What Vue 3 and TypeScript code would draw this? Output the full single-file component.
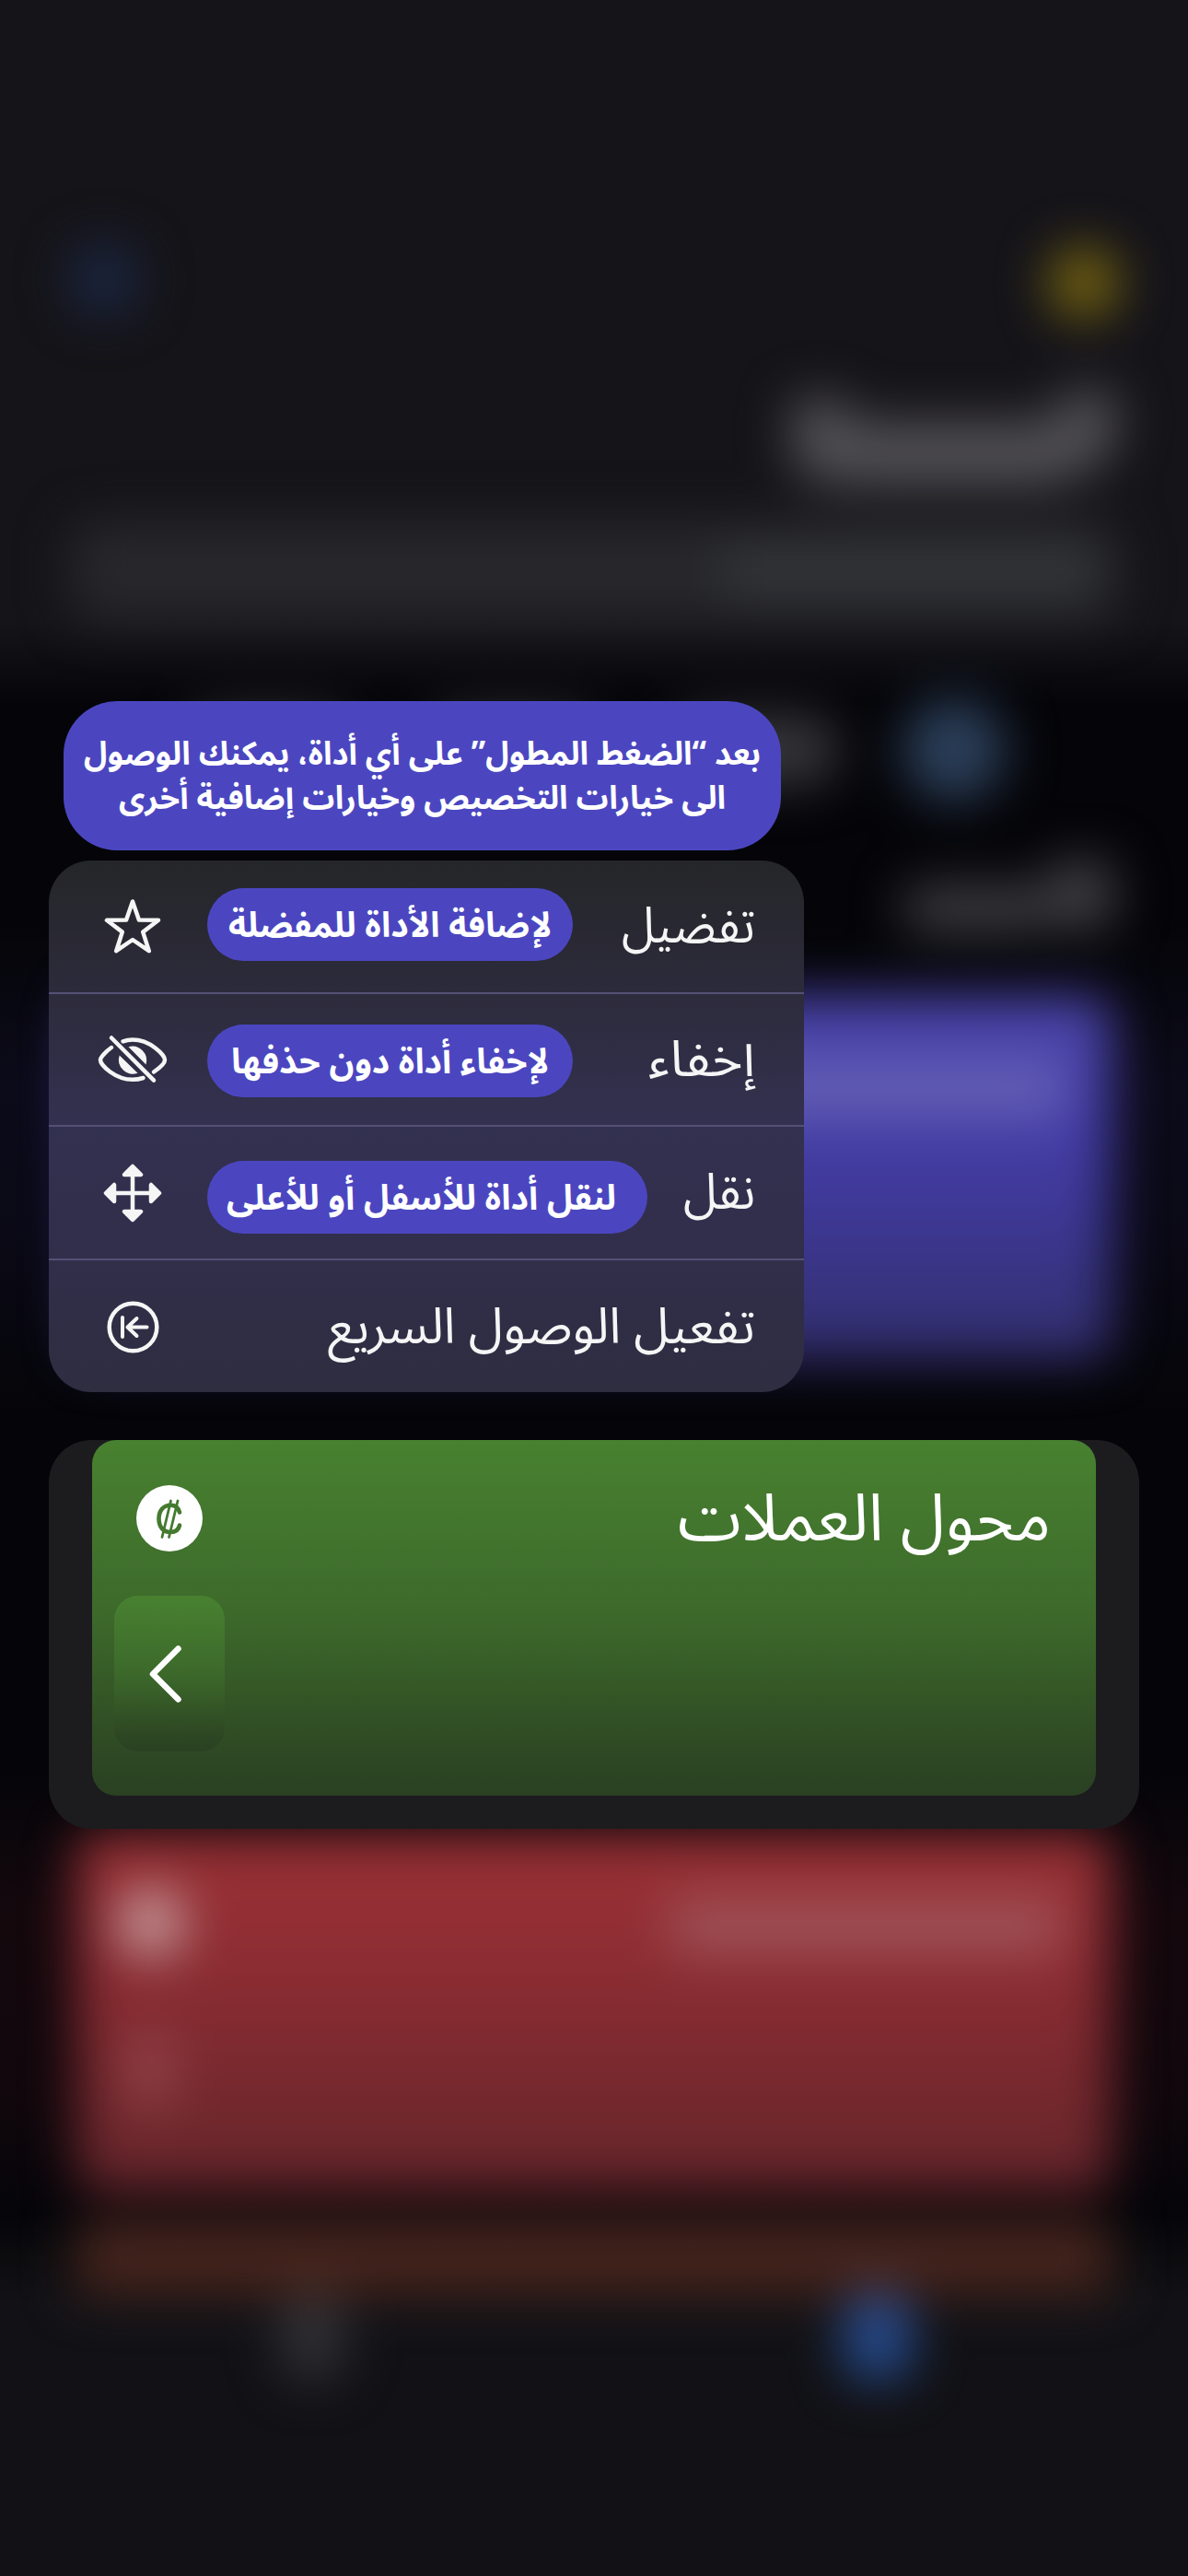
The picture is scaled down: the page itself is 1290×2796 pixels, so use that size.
<script setup lang="ts">
type IconName = 'star' | 'hide' | 'move' | 'quick'

interface MenuItem {
  icon: IconName
  label: string
  width: number
  hint?: string
  hintWidth?: number
}

const items: MenuItem[] = [
  { icon: 'star', label: 'تفضيل', width: 145, hint: 'لإضافة الأداة للمفضلة', hintWidth: 351 },
  { icon: 'hide', label: 'إخفاء', width: 116, hint: 'لإخفاء أداة دون حذفها', hintWidth: 345 },
  { icon: 'move', label: 'نقل', width: 78, hint: 'لنقل أداة للأسفل أو للأعلى', hintWidth: 423 },
  { icon: 'quick', label: 'تفعيل الوصول السريع', width: 464 },
]

const tip = [
  { text: 'بعد “الضغط المطول” على أي أداة، يمكنك الوصول', width: 735 },
  { text: 'الى خيارات التخصيص وخيارات إضافية أخرى', width: 659 },
]
</script>

<template>
  <div class="screen">
    <div class="backdrop">
      <div class="scene">
        <div class="nav"><i class="dot blue"></i><i class="dot yellow"></i></div>
        <div class="heading"><i class="h1"></i><i class="h2"></i><i class="h3"></i></div>
        <div class="search"><i></i></div>
        <div class="chips"><i></i><i></i><i></i><i class="on"></i></div>
        <div class="section"><i class="s1"></i><i class="s2"></i></div>
        <div class="tile violet"><i></i></div>
        <div class="tile red"><b></b><i></i><u></u></div>
        <div class="tile orange"></div>
        <div class="tabs"><i></i><i class="on"></i></div>
      </div>
    </div>

    <main class="content">
      <div class="tip">
        <svg v-for="t in tip" :key="t.text" :width="t.width" height="48" class="txt bold">
          <text :x="t.width" y="35" :textLength="t.width" lengthAdjust="spacingAndGlyphs" font-size="35">{{ t.text }}</text>
        </svg>
      </div>

      <div class="menu">
        <div v-for="item in items" :key="item.icon" class="row" :class="item.icon">
          <div class="icon">
            <svg v-if="item.icon === 'star'" width="76" height="76" viewBox="0 0 76 76" class="line">
              <path d="M38 10.500L44.900 30.500L66 30.800L49.200 43.600L55.800 64.200L38 52L20.200 64.200L26.800 43.600L10 30.800L31.100 30.500Z" />
            </svg>
            <svg v-else-if="item.icon === 'hide'" width="76" height="76" viewBox="0 0 76 76" class="line">
              <path d="M27.500 17.300C30.700 16.100 34.200 15.500 38 15.500C57 15.500 73 32 73 37.500C73 40.500 67.500 46 61 50.500" />
              <path d="M49.500 57C45.800 58.200 42 58.800 38 58.800C19 58.800 3 43 3 37.500C3 35 8.500 28.500 15 24" />
              <path class="solid" d="M33.500 23.200A15.400 15.400 0 0 1 52.500 42.400ZM23.700 32.500A15.400 15.400 0 0 0 43.500 51.700Z" />
              <path d="M15 13.500L61 59.700" />
            </svg>
            <svg v-else-if="item.icon === 'move'" width="76" height="76" viewBox="0 0 76 76" class="line">
              <path d="M38 16V60M16 38H60" />
              <path class="head" d="M38 9L47 18H29ZM38 67L47 58H29ZM9 38L18 29V47ZM67 38L58 29V47Z" />
            </svg>
            <svg v-else width="76" height="76" viewBox="0 0 76 76" class="line">
              <circle cx="38.500" cy="37.500" r="25.800" />
              <path d="M27 27V48M53.500 37.500H32.500M42.500 28L32.500 37.500L42.500 47" stroke-width="4" />
            </svg>
          </div>
          <div v-if="item.hint" class="hint">
            <svg :width="item.hintWidth" height="50" class="txt bold">
              <text :x="item.hintWidth" y="37.500" :textLength="item.hintWidth" lengthAdjust="spacingAndGlyphs" font-size="38">{{ item.hint }}</text>
            </svg>
          </div>
          <svg :width="item.width" height="100" class="txt label">
            <text :x="item.width" y="67.500" :textLength="item.width" lengthAdjust="spacingAndGlyphs" font-size="54">{{ item.label }}</text>
          </svg>
        </div>
      </div>

      <div class="preview">
        <div class="card">
          <div class="top">
            <svg width="72" height="72" viewBox="0 0 72 72">
              <circle cx="36" cy="36" r="36" fill="#fff" />
              <g fill="none" stroke="#447a2f" stroke-linecap="round">
                <path d="M47 29.500C45.500 24 42 21.800 37.500 21.800C29.500 21.800 24.500 27.500 24.500 36.500C24.500 45.500 29.500 51 37 51C42.500 51 46 48.500 47 43.500" stroke-width="4.600" />
                <path d="M37.500 17L28 56.500M45 17L35.500 56.500" stroke-width="2.800" />
              </g>
            </svg>
            <svg width="405" height="110" class="txt">
              <text x="405" y="79" textLength="405" lengthAdjust="spacingAndGlyphs" font-size="71">محول العملات</text>
            </svg>
          </div>
          <div class="go">
            <svg width="48" height="72" viewBox="0 0 48 72"><path d="M34.500 8.500L7 36L34.500 63.500" fill="none" stroke="#fff" stroke-width="6.500" stroke-linecap="round" stroke-linejoin="round" /></svg>
          </div>
        </div>
      </div>
    </main>
  </div>
</template>

<style>
body {
  background: #050509;
}
</style>

<style scoped>
.screen {
  position: relative;
  width: 1290px;
  height: 2796px;
  overflow: hidden;
  font-family: "Noto Sans Arabic", "Noto Sans", "DejaVu Sans", sans-serif;
}
.backdrop {
  position: absolute;
  inset: 0;
  background: linear-gradient(#151419 0, #151419 675px, #0e0e13 712px, #050509 765px, #050509 1010px, #0c0b1a 1180px, #0a0915 1350px, #050509 1530px, #050509 1930px, #14080d 2080px, #10070c 2280px, #050509 2400px, #0c0c0f 2450px, #121216 2500px, #121216 100%);
}
.scene {
  display: flex;
  flex-direction: column;
  height: 2796px;
  filter: blur(27px);
}
.scene i,
.scene b,
.scene u {
  display: block;
}
.nav {
  display: flex;
  justify-content: space-between;
  padding: 264px 74px 0 74px;
}
.dot {
  width: 78px;
  height: 78px;
  border-radius: 50%;
}
.dot.blue { background: #1b2742; }
.dot.yellow { background: #766411; margin-top: 4px; }
.heading {
  display: flex;
  justify-content: flex-end;
  align-items: flex-end;
  height: 100px;
  margin: 80px 76px 0 0;
}
.heading i { background: #535257; }
.h1 { width: 64px; height: 94px; border-radius: 20px 20px 20px 50px; }
.h2 { width: 225px; height: 68px; }
.h3 { width: 66px; height: 94px; border-radius: 20px 20px 60px 0; margin-bottom: 8px; }
.search {
  display: flex;
  justify-content: flex-end;
  align-items: center;
  height: 108px;
  margin: 40px 76px 0;
  border-radius: 26px;
  background: #27272c;
}
.search i { width: 410px; height: 54px; margin-right: 20px; background: #34363a; }
.chips {
  display: flex;
  align-items: center;
  gap: 86px;
  height: 116px;
  margin: 82px 0 0 200px;
}
.chips i { width: 180px; height: 78px; border-radius: 39px; background: #37373b; }
.chips i.on { width: 112px; height: 112px; border-radius: 50%; background: #2c405b; margin-left: -18px; }
.section {
  display: flex;
  justify-content: flex-end;
  align-items: flex-end;
  height: 84px;
  margin: 59px 80px 0 0;
}
.section i { background: #404044; }
.s1 { width: 158px; height: 50px; margin-bottom: 4px; border-radius: 20px; }
.s2 { width: 72px; height: 76px; margin-bottom: 6px; border-radius: 20px; }
.tile {
  flex: none;
  margin: 0 83px;
  border-radius: 24px;
}
.violet {
  height: 394px;
  margin-top: 67px;
  background: linear-gradient(#4c46ac 0, #453ea8 35%, #3e3896 58%, #37337d 82%, #322e6c 100%);
}
.violet i { width: 400px; height: 56px; margin: 0 50px 0 auto; position: relative; top: 72px; background: #6560b4; border-radius: 20px; }
.red {
  display: grid;
  grid-template-columns: 74px 1fr;
  justify-items: end;
  align-content: start;
  row-gap: 86px;
  height: 388px;
  margin-top: 514px;
  padding: 60px 52px 0 44px;
  box-sizing: border-box;
  background: linear-gradient(#983034 0, #912e34 28%, #802a30 55%, #6b272c 88%, #66262b 100%);
}
.red b { width: 74px; height: 74px; border-radius: 50%; background: #c49a9d; }
.red i { width: 430px; height: 60px; margin-top: 10px; background: #9e5157; border-radius: 20px; }
.red u { width: 48px; height: 76px; background: #91434a; margin-right: 14px; }
.orange { height: 76px; margin-top: 36px; background: #48251d; border-radius: 10px 10px 0 0; }
.tabs {
  display: flex;
  gap: 542px;
  margin: 0 0 0 304px;
}
.tabs i { width: 70px; height: 94px; background: #313135; border-radius: 30px; }
.tabs i.on { background: #264c90; width: 74px; }

.content {
  position: relative;
  display: flex;
  flex-direction: column;
  align-items: flex-start;
  padding: 761px 53px 0;
}
.txt {
  display: block;
  flex: none;
  overflow: visible;
  direction: rtl;
  fill: #fff;
}
.bold { font-weight: 700; }
.tip {
  display: flex;
  flex-direction: column;
  align-items: center;
  box-sizing: border-box;
  width: 779px;
  height: 162px;
  margin-left: 16px;
  padding-top: 34px;
  border-radius: 58px;
  background: #4b46c0;
}
.menu {
  width: 820px;
  height: 577px;
  margin-top: 11px;
  border-radius: 46px;
  overflow: hidden;
  background: linear-gradient(#252629 0, #2a2935 17%, #2f2d42 33%, #333150 50%, #322f4d 65%, #302e48 80%, #2f2d40 100%);
}
.row {
  display: flex;
  align-items: center;
  box-sizing: border-box;
  height: 144.500px;
  padding-right: 53px;
  border-bottom: 2px solid #545076;
}
.row:last-child { border-bottom: 0; }
.icon {
  flex: none;
  width: 118.700px;
  padding: 2px 0 0 53.300px;
}
.icon svg { display: block; }
.line {
  fill: none;
  stroke: #f5f5f5;
  stroke-width: 4.500px;
  stroke-linecap: round;
  stroke-linejoin: round;
}
.line path[stroke-width="4"] { stroke-width: 4px; }
.line .solid { fill: #f5f5f5; stroke: none; }
.line .head { fill: #f5f5f5; }
.hint {
  display: flex;
  align-items: center;
  justify-content: center;
  box-sizing: border-box;
  width: 397px;
  height: 79px;
  border-radius: 40px;
  background: #4b46c0;
}
.star .hint { margin-top: -3px; }
.hide .hint { margin-top: 4px; }
.move .hint { width: 478px; margin-top: 11px; padding-right: 12px; }
.label { margin-left: auto; fill: #f5f5f5; }
.preview {
  box-sizing: border-box;
  width: 1184px;
  height: 422px;
  margin-top: 52px;
  padding: 0 47px;
  border-radius: 46px;
  background: #1c1c1e;
}
.card {
  box-sizing: border-box;
  height: 386px;
  padding: 36px 49px 0 24px;
  border-radius: 26px;
  background: linear-gradient(#488130 0, #3d6a2b 48%, #345626 72%, #2c4523 92%, #2a4122 100%);
}
.top {
  display: flex;
  align-items: center;
  justify-content: space-between;
  height: 98px;
  padding-left: 24px;
}
.go {
  display: flex;
  align-items: center;
  justify-content: center;
  width: 120px;
  height: 169px;
  margin-top: 35px;
  border-radius: 26px;
  background: linear-gradient(#488130 0, #3d6a2b 48%, #345626 72%, #2c4523 92%, #2a4122 100%);
}
.go svg { display: block; margin-left: -3px; }
</style>
